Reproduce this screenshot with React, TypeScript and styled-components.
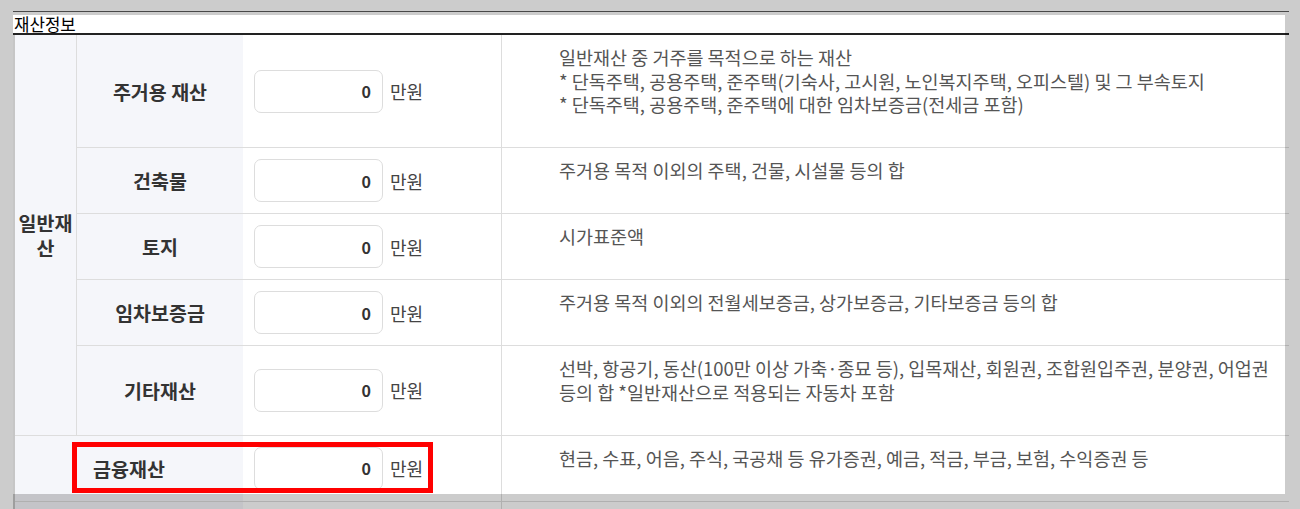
import React from 'react';
import styled, {createGlobalStyle} from 'styled-components';

const GlobalStyle = createGlobalStyle`
  html, body {
    margin: 0;
    padding: 0;
    background: #fff;
    overflow: hidden;
  }
  body {
    font-family: "Noto Sans CJK KR", "Noto Sans", sans-serif;
  }
`;

const Page = styled.div`
  position: relative;
  width: 1276px;
  padding: 11px 11px 0 13px;
`;

const TopRule = styled.div`
  border-top: 1px solid #5c5c5c;
`;

const Title = styled.h2`
  margin: 3px 0 0;
  padding-left: 1px;
  font-size: 16.8px;
  font-weight: 400;
  line-height: 18px;
  color: #000;
  border-bottom: 2px solid #222;
`;

const Table = styled.table`
  width: 1276px;
  table-layout: fixed;
  border-collapse: separate;
  border-spacing: 0;
  border-left: 2px solid #c6c6c6;
`;

const Cell = styled.td`
  border-bottom: 1px solid #ddd;
  box-sizing: border-box;
`;

const GroupCell = styled(Cell)`
  background: #f5f6fa;
  border-right: 1px solid #ddd;
  padding: 0 2px;
  text-align: center;
  vertical-align: middle;
  font-size: 19.5px;
  font-weight: 700;
  line-height: 25px;
  color: #333;
`;

const LabelCell = styled(Cell)`
  background: #f5f6fa;
  text-align: center;
  vertical-align: middle;
  font-size: 19.5px;
  font-weight: 700;
  color: #333;
`;

const InputCell = styled(Cell)`
  padding: 0 0 0 11px;
  border-right: 1px solid #ddd;
  vertical-align: middle;
`;

const DescCell = styled(Cell)`
  padding: 11px 6px 30.5px 57px;
  vertical-align: top;
  font-size: 18.5px;
  line-height: 23.5px;
  color: #555;
`;

const AmountField = styled.div`
  display: flex;
  align-items: center;
`;

const AmountInput = styled.input`
  box-sizing: border-box;
  width: 129px;
  height: 43px;
  padding: 0 11px;
  border: 1px solid #ddd;
  border-radius: 7px;
  background: #fff;
  text-align: right;
  font-family: inherit;
  font-size: 16px;
  font-weight: 700;
  color: #333;
  outline: none;
`;

const Unit = styled.span`
  margin-left: 7px;
  font-size: 18px;
  color: #444;
`;

const Highlight = styled.div`
  position: absolute;
  left: 72px;
  top: 442px;
  width: 361px;
  height: 51px;
  box-sizing: border-box;
  border: 5px solid #f00;
  z-index: 2;
`;

const Shade = styled.div`
  position: absolute;
  left: 13px;
  top: 15px;
  width: 1272px;
  height: 479px;
  box-shadow: 0 0 0 1500px rgba(0, 0, 0, 0.2);
  pointer-events: none;
  z-index: 1;
`;

type Asset = {
    label: string;
    lines: string[];
}

const generalAssets: Asset[] = [
    {
        label: '주거용 재산',
        lines: [
            '일반재산 중 거주를 목적으로 하는 재산',
            '* 단독주택, 공용주택, 준주택(기숙사, 고시원, 노인복지주택, 오피스텔) 및 그 부속토지',
            '* 단독주택, 공용주택, 준주택에 대한 임차보증금(전세금 포함)',
        ],
    },
    {label: '건축물', lines: ['주거용 목적 이외의 주택, 건물, 시설물 등의 합']},
    {label: '토지', lines: ['시가표준액']},
    {label: '임차보증금', lines: ['주거용 목적 이외의 전월세보증금, 상가보증금, 기타보증금 등의 합']},
    {
        label: '기타재산',
        lines: ['선박, 항공기, 동산(100만 이상 가축·종묘 등), 입목재산, 회원권, 조합원입주권, 분양권, 어업권 등의 합 *일반재산으로 적용되는 자동차 포함'],
    },
];

const Amount = () => (
    <AmountField>
        <AmountInput type="text" defaultValue="0" readOnly/>
        <Unit>만원</Unit>
    </AmountField>
)

const Desc = ({lines}: {lines: string[]}) => (
    <DescCell>
        {lines.map((line, i) => (
            <div key={i}>{line}</div>
        ))}
    </DescCell>
)

export default function App() {
    return (
        <>
            <GlobalStyle/>
            <Page>
                <TopRule/>
                <Title>재산정보</Title>
                <Table>
                    <colgroup>
                        <col style={{width: 62}}/>
                        <col style={{width: 166}}/>
                        <col style={{width: 259}}/>
                        <col/>
                    </colgroup>
                    <tbody>
                    {generalAssets.map((el, i) => (
                        <tr key={el.label}>
                            {i === 0 && <GroupCell rowSpan={generalAssets.length}>일반재산</GroupCell>}
                            <LabelCell>{el.label}</LabelCell>
                            <InputCell><Amount/></InputCell>
                            <Desc lines={el.lines}/>
                        </tr>
                    ))}
                    <tr>
                        <LabelCell colSpan={2}>금융재산</LabelCell>
                        <InputCell><Amount/></InputCell>
                        <Desc lines={['현금, 수표, 어음, 주식, 국공채 등 유가증권, 예금, 적금, 부금, 보험, 수익증권 등']}/>
                    </tr>
                    <tr style={{height: 8}}>
                        <LabelCell colSpan={2}/>
                        <InputCell/>
                        <Cell/>
                    </tr>
                    </tbody>
                </Table>
                <Highlight/>
                <Shade/>
            </Page>
        </>
    );
}
